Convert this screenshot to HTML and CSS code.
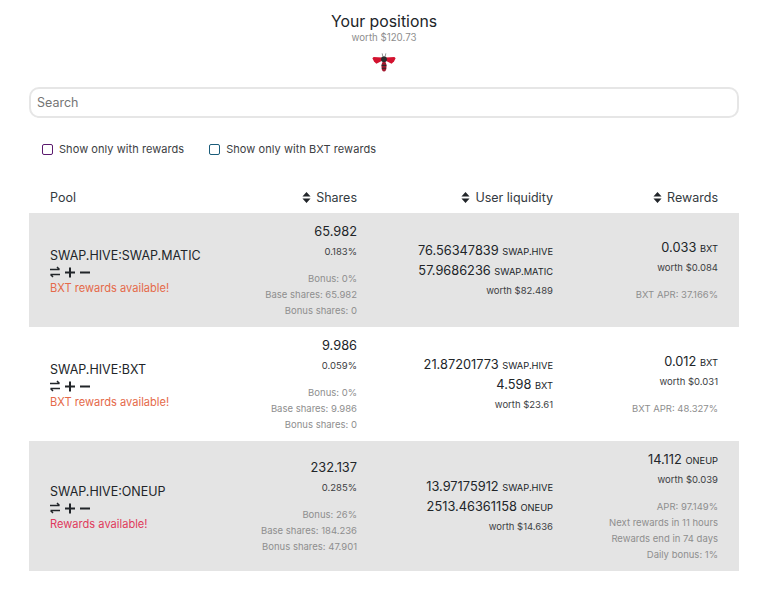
FILE: index.html
```html
<!DOCTYPE html>
<html lang="en">
<head>
<meta charset="utf-8">
<title>Your positions</title>
<link rel="stylesheet" href="styles.css">
</head>
<body>
<header class="head">
  <h1 class="title">Your positions</h1>
  <div class="worth-total">worth $120.73</div>
  <svg class="bee" viewBox="0 0 24 20" width="24" height="20" aria-hidden="true">
    <path d="M10 5.6 1.6 4.9.4 6.2 2 9.4 4.4 11.8 10.2 8.8Z" fill="#d3122f"/>
    <path d="M14 5.6 22.4 4.9 23.6 6.2 22 9.4 19.6 11.8 13.8 8.8Z" fill="#d3122f"/>
    <ellipse cx="12" cy="14.4" rx="2.5" ry="5" fill="#a3182f"/>
    <path d="M9.6 13.4h4.8M9.9 16.2h4.2" stroke="#2b2b2b" stroke-width="1.1"/>
    <circle cx="12" cy="7.2" r="2.9" fill="#2b2b2b"/>
    <path d="M10.8 4.4 10.2 1.4M13.2 4.4 13.8 1.4" stroke="#8a8a8a" stroke-width=".9" fill="none"/>
  </svg>
</header>

<input class="search" type="text" placeholder="Search">

<div class="filters">
  <label class="filter"><span class="box box-purple"></span>Show only with rewards</label>
  <label class="filter"><span class="box box-teal"></span>Show only with BXT rewards</label>
</div>

<table class="pools">
  <colgroup><col class="c1"><col class="c2"><col class="c3"><col class="c4"></colgroup>
  <thead>
    <tr>
      <th class="left">Pool</th>
      <th><svg class="sort" viewBox="0 0 10 12"><path d="M5 0 9.5 5H.5ZM5 12 .5 7h9Z"/></svg>Shares</th>
      <th><svg class="sort" viewBox="0 0 10 12"><path d="M5 0 9.5 5H.5ZM5 12 .5 7h9Z"/></svg>User liquidity</th>
      <th><svg class="sort" viewBox="0 0 10 12"><path d="M5 0 9.5 5H.5ZM5 12 .5 7h9Z"/></svg>Rewards</th>
    </tr>
  </thead>
  <tbody>
    <tr class="shade">
      <td class="left nudge">
        <div class="line name">SWAP.HIVE:SWAP.MATIC</div>
        <div class="actions"><svg viewBox="0 0 40 12" width="40" height="12"><use href="#acts"/></svg></div>
        <div class="avail bxt">BXT rewards available!</div>
      </td>
      <td>
        <div class="line">65.982</div>
        <div class="line sm">0.183%</div>
        <div class="details">
          <div>Bonus: 0%</div>
          <div>Base shares: 65.982</div>
          <div>Bonus shares: 0</div>
        </div>
      </td>
      <td class="nudge">
        <div class="line">76.56347839 <span class="unit">SWAP.HIVE</span></div>
        <div class="line">57.9686236 <span class="unit">SWAP.MATIC</span></div>
        <div class="line sm">worth $82.489</div>
      </td>
      <td>
        <div class="line">0.033 <span class="unit">BXT</span></div>
        <div class="line sm">worth $0.084</div>
        <div class="details"><div>BXT APR: 37.166%</div></div>
      </td>
    </tr>
    <tr>
      <td class="left nudge">
        <div class="line name">SWAP.HIVE:BXT</div>
        <div class="actions"><svg viewBox="0 0 40 12" width="40" height="12"><use href="#acts"/></svg></div>
        <div class="avail bxt">BXT rewards available!</div>
      </td>
      <td>
        <div class="line">9.986</div>
        <div class="line sm">0.059%</div>
        <div class="details">
          <div>Bonus: 0%</div>
          <div>Base shares: 9.986</div>
          <div>Bonus shares: 0</div>
        </div>
      </td>
      <td class="nudge">
        <div class="line">21.87201773 <span class="unit">SWAP.HIVE</span></div>
        <div class="line">4.598 <span class="unit">BXT</span></div>
        <div class="line sm">worth $23.61</div>
      </td>
      <td>
        <div class="line">0.012 <span class="unit">BXT</span></div>
        <div class="line sm">worth $0.031</div>
        <div class="details"><div>BXT APR: 48.327%</div></div>
      </td>
    </tr>
    <tr class="shade">
      <td class="left nudge">
        <div class="line name">SWAP.HIVE:ONEUP</div>
        <div class="actions"><svg viewBox="0 0 40 12" width="40" height="12"><use href="#acts"/></svg></div>
        <div class="avail plain">Rewards available!</div>
      </td>
      <td>
        <div class="line">232.137</div>
        <div class="line sm">0.285%</div>
        <div class="details">
          <div>Bonus: 26%</div>
          <div>Base shares: 184.236</div>
          <div>Bonus shares: 47.901</div>
        </div>
      </td>
      <td class="nudge">
        <div class="line">13.97175912 <span class="unit">SWAP.HIVE</span></div>
        <div class="line">2513.46361158 <span class="unit">ONEUP</span></div>
        <div class="line sm">worth $14.636</div>
      </td>
      <td>
        <div class="line">14.112 <span class="unit">ONEUP</span></div>
        <div class="line sm">worth $0.039</div>
        <div class="details">
          <div>APR: 97.149%</div>
          <div>Next rewards in 11 hours</div>
          <div>Rewards end in 74 days</div>
          <div>Daily bonus: 1%</div>
        </div>
      </td>
    </tr>
  </tbody>
</table>

<svg class="defs" width="0" height="0" aria-hidden="true">
  <defs>
    <g id="acts" fill="none" stroke="#212529">
      <path d="M0 3.5H9.5M7 1 9.5 3.5M10 8.5H.5M3 11 .5 8.5" stroke-width="1.5"/>
      <path d="M20 1.5V11.5M15 6.5H25" stroke-width="2"/>
      <path d="M30 6.5H40" stroke-width="2"/>
    </g>
  </defs>
</svg>
</body>
</html>
```

FILE: styles.css
```css
* { box-sizing: border-box; }
html, body { margin: 0; padding: 0; }
body {
  background: #fff;
  color: #212529;
  font-family: Inter, "Liberation Sans", sans-serif;
  font-size: 14px;
  line-height: 20px;
  padding: 10px 29px 0;
}
.head { display: flex; flex-direction: column; align-items: center; }
.title { margin: 0; font-size: 15.8px; font-weight: 400; line-height: 24px; }
.worth-total { margin-top: -1px; font-size: 9.7px; line-height: 10px; color: #8e8e8e; }
.bee { display: block; margin-top: 9px; }
.search {
  display: block;
  width: 100%;
  height: 31px;
  margin-top: 15px;
  padding: 0 6px;
  border: 2px solid #e6e6e6;
  border-radius: 10px;
  background: #fff;
  font: 12.5px/20px Inter, "Liberation Sans", sans-serif;
  color: #212529;
  outline: none;
}
.search::placeholder { color: #757575; opacity: 1; }
.filters { display: flex; gap: 25px; margin-top: 23px; padding-left: 13px; }
.filter { display: flex; align-items: center; gap: 6px; font-size: 11px; line-height: 16px; color: #3c4043; letter-spacing: .06px; }
.box { display: block; width: 11px; height: 11px; border-radius: 2px; border: 1px solid #6a6a6a; background: #fff; }
.box-purple { border-color: #5b1a6e; }
.box-teal { border-color: #1a5c7a; }
.pools { width: 100%; margin-top: 23px; border-collapse: collapse; table-layout: fixed; }
.c1 { width: 180px; } .c2 { width: 169px; } .c3 { width: 196px; } .c4 { width: 165px; }
.pools th { font-weight: 400; font-size: 12.5px; line-height: 20px; color: #333a40; text-align: right; padding: 8px 21px 5px; vertical-align: middle; }
.pools td { text-align: right; padding: 8.5px 21px; vertical-align: middle; }
.pools td.nudge { padding-top: 10.5px; }
.pools .left { text-align: left; }
.shade td { background: #e4e4e4; }
.sort { width: 9px; height: 11px; margin-right: 5px; vertical-align: -1px; fill: #212529; }
.line { font-size: 12.8px; line-height: 20px; white-space: nowrap; }
.name { font-size: 12.5px; }
.sm { font-size: 9.5px; color: #3c4043; }
.unit { font-size: 9.3px; line-height: 0; }
.details { margin-top: 9px; font-size: 9.5px; line-height: 16px; color: #8e8e8e; white-space: nowrap; }
.actions { height: 12px; margin: 0 0 2px; line-height: 0; }
.avail { font-size: 11.1px; line-height: 16px; white-space: nowrap; }
.bxt { color: #e56a4a; }
.plain { color: #e03a5c; }
.defs { position: absolute; }
```
